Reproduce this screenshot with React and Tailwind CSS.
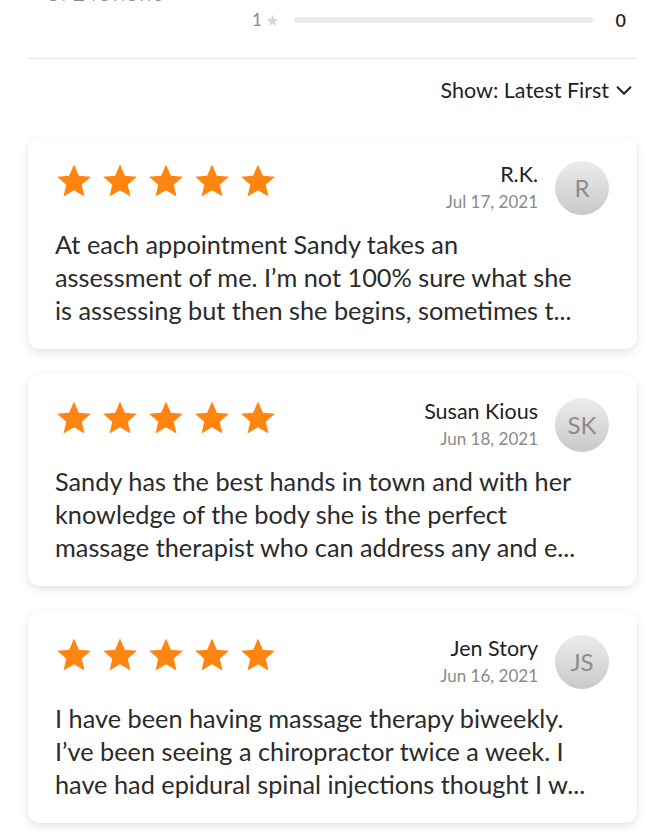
import React from "react";

const reviews = [
  {
    name: "R.K.",
    date: "Jul 17, 2021",
    initials: "R",
    lines: [
      "At each appointment Sandy takes an",
      "assessment of me. I\u2019m not 100% sure what she",
      "is assessing but then she begins, sometimes t...",
    ],
  },
  {
    name: "Susan Kious",
    date: "Jun 18, 2021",
    initials: "SK",
    lines: [
      "Sandy has the best hands in town and with her",
      "knowledge of the body she is the perfect",
      "massage therapist who can address any and e...",
    ],
  },
  {
    name: "Jen Story",
    date: "Jun 16, 2021",
    initials: "JS",
    lines: [
      "I have been having massage therapy biweekly.",
      "I\u2019ve been seeing a chiropractor twice a week. I",
      "have had epidural spinal injections thought I w...",
    ],
  },
];

function Star({ className }) {
  return (
    <svg viewBox="0 0 24 24" className={className} fill="currentColor">
      <path d="M12 1.6l3.05 7.03 7.62.68-5.77 5.03 1.72 7.46L12 17.9l-6.62 3.9 1.72-7.46L1.33 9.31l7.62-.68z" />
    </svg>
  );
}

function Card({ r }) {
  return (
    <div className="bg-white rounded-[12px] shadow-[0_4px_10px_rgba(0,0,0,0.10),0_0_3px_rgba(0,0,0,0.04)] pl-[27px] pr-[28px] pt-[24px] pb-[22px]">
      <div className="flex items-start">
        <div className="flex gap-[8px] mt-[1px] text-[#ff8410]">
          {[0, 1, 2, 3, 4].map((i) => (
            <Star key={i} className="w-[38px] h-[38px]" />
          ))}
        </div>
        <div className="flex-1" />
        <div className="flex flex-col items-end mr-[17px]">
          <div className="text-[21.5px] leading-[27px] text-[#222]">{r.name}</div>
          <div className="text-[17px] leading-[27px] text-[#8a8a8a]">{r.date}</div>
        </div>
        <div className="w-[54px] h-[54px] rounded-full bg-gradient-to-b from-[#ececec] to-[#c9c9c9] flex items-center justify-center text-[24px] text-[#8c8c8c]">
          {r.initials}
        </div>
      </div>
      <div className="mt-[13px] text-[25.3px] leading-[33px] text-[#2b2b2b]">
        {r.lines.map((l, i) => (
          <div key={i} className="whitespace-nowrap">{l}</div>
        ))}
      </div>
    </div>
  );
}

export default function App() {
  return (
    <div
      className="w-[665px] h-[832px] overflow-hidden bg-white"
      style={{ fontFamily: "Lato, 'Open Sans', sans-serif" }}
    >
      <div className="-mt-[28px] px-[28px]">
        <div className="flex items-end h-[28px]">
          <div className="pl-[19px] -mb-[7px] text-[22px] leading-[28px] text-[#8a8a8a] font-light">372 reviews</div>
        </div>
        <div className="flex items-center h-[40px] pl-[224px] pr-[11px]">
          <span className="text-[17px] text-[#8a8a8a]">1</span>
          <Star className="w-[13px] h-[13px] ml-[4px] text-[#d6d6d6]" />
          <div className="ml-[15px] w-[299px] h-[6px] rounded-full bg-[#ececec]" />
          <div className="flex-1" />
          <span className="text-[18px] font-semibold text-[#222]">0</span>
        </div>
        <div className="mt-[18px] h-px bg-[#e6e6e6]" />
        <div className="flex justify-end items-center h-[62px] pr-[2px]">
          <span className="text-[21.5px] text-[#222]">Show: Latest First</span>
          <svg viewBox="0 0 24 24" className="w-[22px] h-[22px] ml-[4px]" fill="none" stroke="#222" strokeWidth="2.2" strokeLinecap="round" strokeLinejoin="round">
            <path d="M5 9l7 7 7-7" />
          </svg>
        </div>
        <div className="mt-[16px] flex flex-col gap-[25px]">
          {reviews.map((r, i) => (
            <Card key={i} r={r} />
          ))}
        </div>
      </div>
    </div>
  );
}
